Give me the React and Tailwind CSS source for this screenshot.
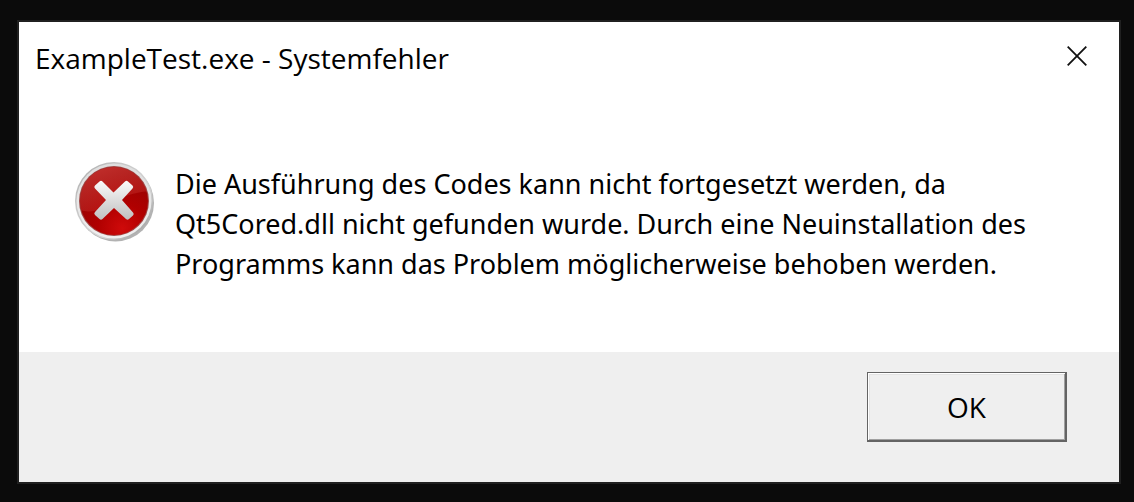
function ErrorIcon() {
  return (
    <svg className="size-20 shrink-0" viewBox="0 0 80 80" aria-hidden="true">
      <defs>
        <linearGradient id="ring" x1="0" y1="0" x2="1" y2="1">
          <stop offset="0" stopColor="#a6a6a6" />
          <stop offset="0.3" stopColor="#c8c8c8" />
          <stop offset="0.65" stopColor="#d4d4d4" />
          <stop offset="1" stopColor="#8f8f8f" />
        </linearGradient>
        <linearGradient id="rim" x1="0" y1="0" x2="0" y2="1">
          <stop offset="0" stopColor="#dedede" />
          <stop offset="1" stopColor="#f0f0f0" />
        </linearGradient>
        <radialGradient id="red" cx="0.62" cy="0.9" r="0.8">
          <stop offset="0" stopColor="#cf0a0a" />
          <stop offset="0.45" stopColor="#b00000" />
          <stop offset="1" stopColor="#960404" />
        </radialGradient>
        <linearGradient id="gloss" x1="0.1" y1="0" x2="0.7" y2="1">
          <stop offset="0" stopColor="#dc4a45" stopOpacity="0.7" />
          <stop offset="1" stopColor="#d03c38" stopOpacity="0.2" />
        </linearGradient>
        <linearGradient id="cross" x1="0" y1="0" x2="0" y2="1">
          <stop offset="0" stopColor="#fafafa" />
          <stop offset="1" stopColor="#c0c0c0" />
        </linearGradient>
        <clipPath id="disc">
          <circle cx="39" cy="39" r="34" />
        </clipPath>
      </defs>
      <circle cx="40.500" cy="41" r="38.500" fill="#000" opacity="0.3" />
      <circle cx="39" cy="39" r="39" fill="url(#ring)" />
      <circle cx="39" cy="39" r="37.500" fill="url(#rim)" />
      <circle cx="39" cy="39" r="35" fill="#a04644" />
      <circle cx="39" cy="39" r="34" fill="url(#red)" />
      <path
        d="M0 0H80V29C62 29 49 34 39 40C29 47 17 52 4 48Z"
        fill="url(#gloss)"
        clipPath="url(#disc)"
      />
      <path
        d="M24.500 19.500Q26 18 27.500 19.500L38.500 30.500L50 19.500Q51.500 18 53 19.500L57.500 23.500Q59 25 57.500 26.500L47 38L58 50.500Q59.500 52 58 53.500L54 57Q52.500 58.500 51 57L39 46L27.500 57Q26 58.500 24.500 57L20 53Q18.500 51.500 20 50L31 38L20 26.500Q18.500 25 20 23.500Z"
        fill="url(#cross)"
      />
    </svg>
  );
}

export default function App() {
  return (
    <main className="flex min-h-screen flex-col bg-[#0b0b0b] pt-5 pr-[13px] pb-[18px] pl-[17px] font-['Open_Sans','Noto_Sans',sans-serif] text-[28px] leading-10 text-black">
      <section
        role="alertdialog"
        aria-labelledby="dialog-title"
        aria-describedby="dialog-message"
        className="flex grow flex-col border-2 border-[#202020] bg-white"
      >
        <header className="flex items-start justify-between pt-4 pr-6 pl-4">
          <h1 id="dialog-title">ExampleTest.exe - Systemfehler</h1>
          <button type="button" aria-label="Schließen" className="flex size-9 items-center justify-center">
            <svg className="size-5" viewBox="0 0 20 20" fill="none" stroke="#111" strokeWidth="1.8" aria-hidden="true">
              <path d="M0.700 0.700L19.300 19.300M19.300 0.700L0.700 19.300" />
            </svg>
          </button>
        </header>
        <div className="flex grow items-start gap-5 px-14 pt-[84px]">
          <ErrorIcon />
          <p id="dialog-message" className="pt-0.5 font-['Noto_Sans',sans-serif] text-[27px]">
            Die Ausführung des Codes kann nicht fortgesetzt werden, da
            <br />
            Qt5Cored.dll nicht gefunden wurde. Durch eine Neuinstallation des
            <br />
            Programms kann das Problem möglicherweise behoben werden.
          </p>
        </div>
        <footer className="flex justify-end bg-[#efefef] pt-5 pr-[52px] pb-10">
          <button
            type="button"
            className="h-[70px] w-[200px] border border-r-2 border-b-2 border-[#646464] bg-[#efefef] shadow-[inset_1px_1px_0_#ffffff,inset_-1px_-1px_0_#a0a0a0,inset_2px_2px_0_#e3e3e3]"
          >
            OK
          </button>
        </footer>
      </section>
    </main>
  );
}
